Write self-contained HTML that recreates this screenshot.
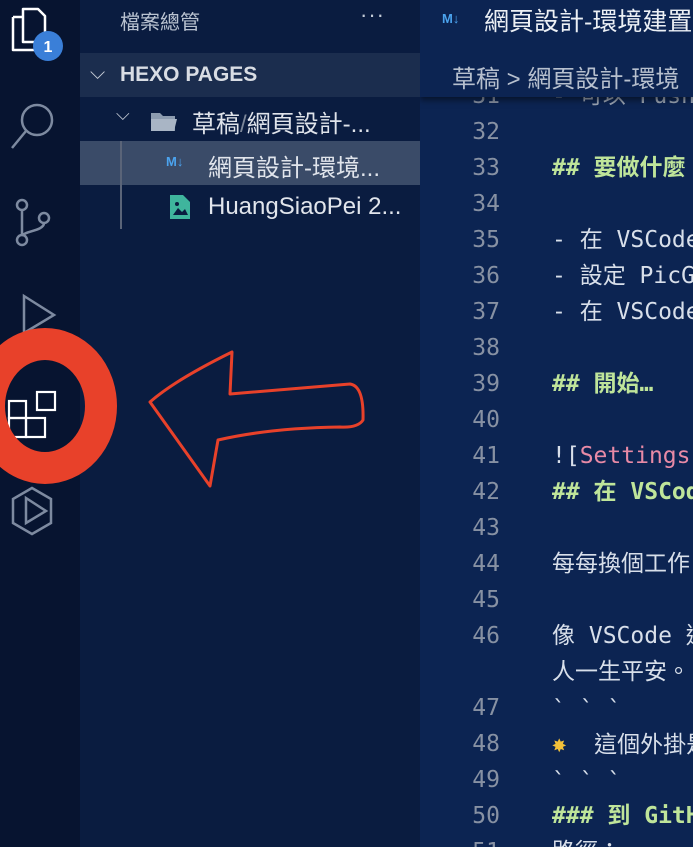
<!DOCTYPE html>
<html><head><meta charset="utf-8"><style>
*{margin:0;padding:0;box-sizing:border-box}
body{width:693px;height:847px;overflow:hidden;background:#0a1c40;font-family:"Liberation Sans","Noto Sans CJK TC",sans-serif;position:relative}
.act{position:absolute;left:0;top:0;width:80px;height:847px;background:#071430}
.side{position:absolute;left:80px;top:0;width:340px;height:847px;background:#0a1c40}
.ed{position:absolute;left:420px;top:0;width:273px;height:847px;background:#0c2452;overflow:hidden}
.t{position:absolute;white-space:nowrap}
.ln{position:absolute;left:0;width:80px;text-align:right;font-family:"DejaVu Sans Mono","Liberation Mono",monospace;font-size:23px;color:#8791a3;line-height:36px}
.code{position:absolute;left:132px;font-family:"DejaVu Sans Mono","Liberation Mono","Noto Sans CJK TC",monospace;font-size:23px;color:#d8dfea;line-height:36px;white-space:pre}
.h{color:#bfe59a;font-weight:bold}
</style></head><body>
<div class="act"></div>
<div class="side">
  <div class="t" style="left:40px;top:6px;font-size:20px;color:#b9c2d0">檔案總管</div>
  <div class="t" style="left:280px;top:2px;font-size:22px;color:#c4ccd8;letter-spacing:1px">···</div>
  <div style="position:absolute;left:0;top:53px;width:340px;height:44px;background:#1b2d4e"></div>
  <div class="t" style="left:10px;top:62px;font-size:20px;color:#c8ced8">⌵</div>
  <div class="t" style="left:40px;top:63px;font-size:21px;font-weight:bold;color:#d9dde4">HEXO PAGES</div>
  <div class="t" style="left:36px;top:104px;font-size:18px;color:#c8ced8">⌵</div>
  <svg style="position:absolute;left:70px;top:110px" width="28" height="22"><path d="M1 3h9l3 3h12v15H1z" fill="#8d9cb0"/><path d="M1 9h26l-3 12H1z" fill="#a9b5c5"/></svg>
  <div class="t" style="left:112px;top:104px;font-size:24px;color:#dfe3ea">草稿<span style="color:#7c879a">/</span>網頁設計-...</div>
  <div style="position:absolute;left:0;top:141px;width:340px;height:44px;background:#3a4b68"></div>
  <div style="position:absolute;left:40px;top:141px;width:2px;height:88px;background:#5a6478"></div>
  <div class="t" style="left:86px;top:154px;font-size:13px;font-weight:bold;color:#4ba3ee">M↓</div>
  <div class="t" style="left:128px;top:148px;font-size:24px;color:#e1e5ec">網頁設計-環境...</div>
  <svg style="position:absolute;left:90px;top:195px" width="20" height="24"><path d="M0 0h13l7 7v17H0z" fill="#3fb59d"/><path d="M3 20l5-7 4 4 3-3 3 6z" fill="#0a1c40"/><circle cx="7" cy="9" r="2" fill="#0a1c40"/></svg>
  <div class="t" style="left:128px;top:193px;font-size:24px;color:#e1e5ec">HuangSiaoPei 2...</div>
</div>
<div class="ed">
  <div style="position:absolute;left:0;top:0;width:273px;height:97px;background:#0c2452;box-shadow:0 3px 6px rgba(0,0,0,.5);z-index:2">
    <div class="t" style="left:22px;top:11px;font-size:13px;font-weight:bold;color:#4ba3ee">M↓</div>
    <div class="t" style="left:64px;top:2px;font-size:25px;color:#ecf0f5">網頁設計-環境建置</div>
    <div class="t" style="left:32px;top:59px;font-size:24px;color:#b7c0ce">草稿 &gt; 網頁設計-環境</div>
  </div>
  <div class="ln" style="top:78px">31</div><div class="code" style="top:78px;color:#9aa4b4">- 可以 Push</div>
  <div class="ln" style="top:114px">32</div>
  <div class="ln" style="top:150px">33</div><div class="code h" style="top:150px">## 要做什麼</div>
  <div class="ln" style="top:186px">34</div>
  <div class="ln" style="top:222px">35</div><div class="code" style="top:222px">- 在 VSCode</div>
  <div class="ln" style="top:258px">36</div><div class="code" style="top:258px">- 設定 PicGo</div>
  <div class="ln" style="top:294px">37</div><div class="code" style="top:294px">- 在 VSCode</div>
  <div class="ln" style="top:330px">38</div>
  <div class="ln" style="top:366px">39</div><div class="code h" style="top:366px">## 開始…</div>
  <div class="ln" style="top:402px">40</div>
  <div class="ln" style="top:438px">41</div><div class="code" style="top:438px">![<span style="color:#e88aa6">Settings</span></div>
  <div class="ln" style="top:474px">42</div><div class="code h" style="top:474px">## 在 VSCode</div>
  <div class="ln" style="top:510px">43</div>
  <div class="ln" style="top:546px">44</div><div class="code" style="top:546px">每每換個工作</div>
  <div class="ln" style="top:582px">45</div>
  <div class="ln" style="top:618px">46</div><div class="code" style="top:618px">像 VSCode 這</div>
  <div class="code" style="top:654px">人一生平安。</div>
  <div class="ln" style="top:690px">47</div><div class="code" style="top:692px">&#96; &#96; &#96;</div>
  <div class="ln" style="top:726px">48</div><div class="code" style="top:726px"><span style="color:#f3c13a;font-size:24px">✸</span>  這個外掛是</div>
  <div class="ln" style="top:762px">49</div><div class="code" style="top:764px">&#96; &#96; &#96;</div>
  <div class="ln" style="top:798px">50</div><div class="code h" style="top:798px">### 到 GitHub</div>
  <div class="ln" style="top:834px">51</div><div class="code" style="top:834px">路徑：</div>
</div>
<svg style="position:absolute;left:0;top:0" width="420" height="847">
  <g fill="none" stroke="#fff" stroke-width="2.5">
    <path d="M13 17h10v25h22V16l-7-7H23v8M13 17v33h24v-8" stroke-linejoin="round"/>
  </g>
  <circle cx="48" cy="46" r="15" fill="#3a7fd8"/>
  <text x="48" y="52" text-anchor="middle" font-family="Liberation Sans" font-weight="bold" font-size="16" fill="#fff">1</text>
  <g fill="none" stroke="#7d8aa0" stroke-width="2.5">
    <circle cx="37" cy="120" r="15"/><path d="M26 131L12 148"/>
    <circle cx="22" cy="205" r="5"/><circle cx="44" cy="218" r="5"/><circle cx="22" cy="240" r="5"/>
    <path d="M22 210v25M44 223c0 8-20 8-22 13"/>
    <path d="M24 296l30 19-30 18z"/>
    <path d="M32 488l19 11v24l-19 11-19-11v-24zM26 498l20 13-20 12z"/>
  </g>
  <g fill="none" stroke="#fff" stroke-width="2.2">
    <rect x="9" y="401" width="17" height="17"/><rect x="9" y="418" width="17" height="19"/><rect x="26" y="418" width="19" height="19"/><rect x="37" y="392" width="18" height="18"/>
  </g>
  <ellipse cx="45" cy="406" rx="56" ry="62" fill="none" stroke="#e8412a" stroke-width="32"/>
  <path d="M232 352 L230 394 Q300 388 350 384 Q364 386 363 420 Q358 428 340 427 Q270 428 218 440 L210 486 L150 402 Q175 380 232 352 Z" fill="none" stroke="#e8412a" stroke-width="3" stroke-linejoin="round"/>
</svg>
</body></html>
